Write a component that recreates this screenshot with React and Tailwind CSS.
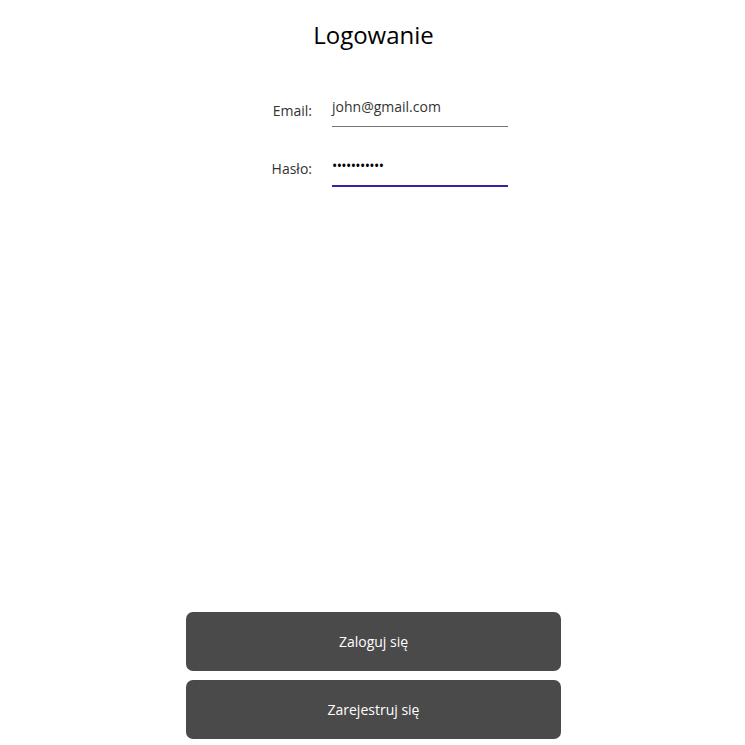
export default function App() {
  return (
    <div className="h-screen w-full bg-white flex flex-col items-center" style={{ fontFamily: '"Open Sans", sans-serif' }}>
      <h1 className="mt-[18px] ml-[2px] text-[24px] leading-[34px] text-black">Logowanie</h1>
      <div className="mt-[45px] ml-[15px] flex flex-col gap-[29px]">
        <div className="flex items-end">
          <label className="w-[60px] text-right text-[14px] text-[#333] pb-[6px]">Email:</label>
          <div className="ml-[20px] w-[176px] h-[30px] border-b border-[#777] text-[14px] text-[#333] leading-[18px] pt-[1px]">john@gmail.com</div>
        </div>
        <div className="flex items-end">
          <label className="w-[60px] text-right text-[14px] text-[#333] pb-[8px]">Hasło:</label>
          <div className="ml-[20px] w-[176px] h-[31px] border-b-2 border-[#3b1fa8] text-[14px] text-black leading-[18px] pt-[1px] tracking-[-0.6px]">•••••••••••</div>
        </div>
      </div>
      <div className="flex-1" />
      <div className="flex flex-col gap-[9px] mb-[6px] ml-[2px]">
        <button className="w-[375px] h-[59px] rounded-[7px] bg-[#4a4a4a] text-white text-[14px]">Zaloguj się</button>
        <button className="w-[375px] h-[59px] rounded-[7px] bg-[#4a4a4a] text-white text-[14px]">Zarejestruj się</button>
      </div>
    </div>
  );
}
